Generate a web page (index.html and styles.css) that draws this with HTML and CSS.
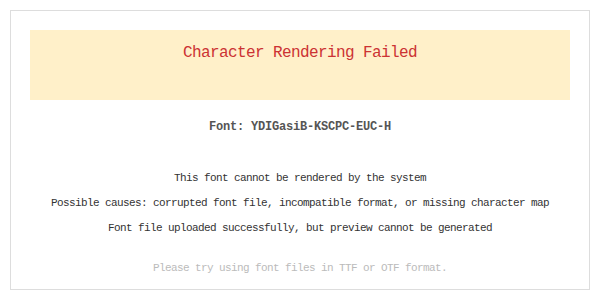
FILE: index.html
```html
<!DOCTYPE html>
<html>
<head>
<meta charset="utf-8">
<link rel="stylesheet" href="styles.css">
</head>
<body>
<div class="card">
  <div class="banner"><h3 class="title">Character Rendering Failed</h3></div>
  <div class="font-name">Font: YDIGasiB-KSCPC-EUC-H</div>
  <div class="messages">
    <p class="msg">This font cannot be rendered by the system</p>
    <p class="msg">Possible causes: corrupted font file, incompatible format, or missing character map</p>
    <p class="msg">Font file uploaded successfully, but preview cannot be generated</p>
    <p class="msg hint">Please try using font files in TTF or OTF format.</p>
  </div>
</div>
</body>
</html>
```

FILE: styles.css
```css
html, body {
  margin: 0;
  padding: 0;
  background: #ffffff;
}
body {
  padding: 10px;
  font-family: "Liberation Mono", "DejaVu Sans Mono", monospace;
}
.card {
  box-sizing: border-box;
  height: 280px;
  border: 1px solid #dddddd;
  padding: 19px;
  text-align: center;
}
.banner {
  box-sizing: border-box;
  height: 70px;
  background: #fff0c9;
  padding-top: 12px;
}
.title {
  margin: 0;
  font-size: 16px;
  line-height: 22px;
  letter-spacing: -0.6px;
  font-weight: normal;
  color: #cc3333;
}
.font-name {
  margin-top: 17px;
  font-size: 12px;
  line-height: 20px;
  letter-spacing: -0.2px;
  font-weight: bold;
  color: #555555;
}
.messages {
  margin-top: 29px;
}
.msg {
  margin: 0;
  font-size: 11px;
  line-height: 25px;
  letter-spacing: -0.6px;
  color: #333333;
}
.hint {
  margin-top: 15px;
  color: #bbbbbb;
}
```
